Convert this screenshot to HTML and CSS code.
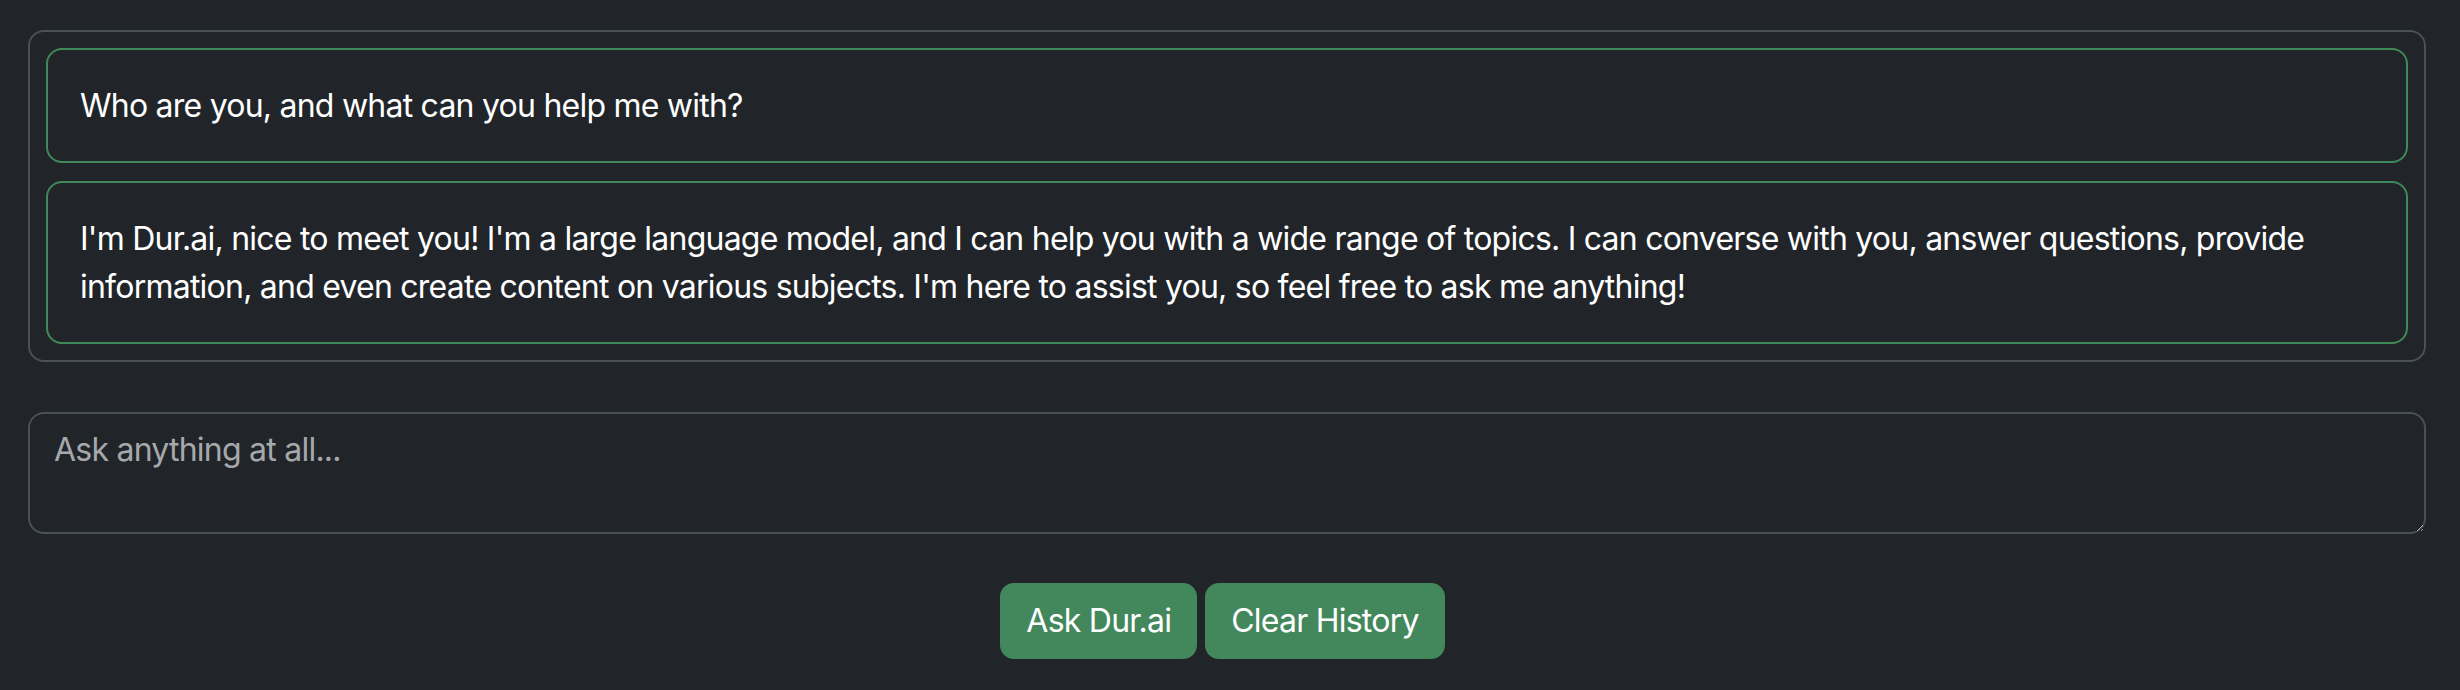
FILE: index.html
```html
<!DOCTYPE html>
<html lang="en">
<head>
<meta charset="utf-8">
<title>Dur.ai</title>
<link rel="stylesheet" href="styles.css">
</head>
<body>
<main class="page">
  <section class="chat">
    <div class="msg">Who are you, and what can you help me with?</div>
    <div class="msg">I'm Dur.ai, nice to meet you! I'm a large language model, and I can help you with a wide range of topics. I can converse with you, answer questions, provide information, and even create content on various subjects. I'm here to assist you, so feel free to ask me anything!</div>
  </section>
  <textarea class="ask" placeholder="Ask anything at all..."></textarea>
  <div class="actions">
    <button class="btn" type="button">Ask Dur.ai</button>
    <button class="btn" type="button">Clear History</button>
  </div>
</main>
</body>
</html>
```

FILE: styles.css
```css
html, body {
  margin: 0;
  background: #212529;
}

body {
  font-family: Inter, "Liberation Sans", sans-serif;
  font-size: 32px;
  line-height: 1.5;
  letter-spacing: -0.024em;
  color: #ffffff;
}

.page {
  padding: 30px 34px 0 28px;
  display: flex;
  flex-direction: column;
}

.chat {
  border: 2px solid #495057;
  border-radius: 16px;
  padding: 16px;
  display: flex;
  flex-direction: column;
  gap: 18px;
}

.msg {
  border: 2px solid #3f8a58;
  border-radius: 16px;
  padding: 31.5px 32px;
}

.ask {
  margin-top: 50px;
  height: 122px;
  box-sizing: border-box;
  padding: 12px 24px;
  border: 2px solid #495057;
  border-radius: 16px;
  background: #212529;
  color: #ffffff;
  font: inherit;
  line-height: 1.5;
  letter-spacing: inherit;
  outline: none;
}

.ask::placeholder {
  color: #a6a9ac;
}

.actions {
  margin-top: 49px;
  display: flex;
  justify-content: center;
  gap: 8px;
  padding-right: 9px;
}

.btn {
  font: inherit;
  line-height: 1.5;
  letter-spacing: inherit;
  color: #ffffff;
  background: #43875c;
  border: 2px solid #43875c;
  border-radius: 14px;
  padding: 12px 24px;
}
```
